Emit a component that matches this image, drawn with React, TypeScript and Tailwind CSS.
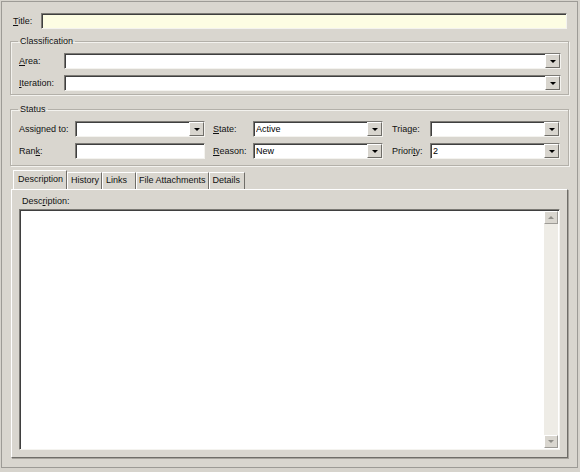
const font = { fontFamily: '"Liberation Sans", Arial, sans-serif' }

function DropButton() {
  return (
    <div className="flex h-[14px] w-[15px] shrink-0 items-center justify-center border border-t-white border-l-white border-b-[#6f6d68] border-r-[#6f6d68] bg-[#d8d5ce]">
      <div className="h-0 w-0 border-x-[3px] border-t-[3px] border-x-transparent border-t-black" />
    </div>
  )
}

function Box({ value, combo, className }: { value?: string; combo?: boolean; className?: string }) {
  return (
    <div
      className={
        "flex h-[16px] items-center border border-[#7c7a75] border-b-[#f4f3ef] border-r-[#f4f3ef] bg-white shadow-[inset_1px_1px_0_#3f3f3f] pl-[2px] pr-0 " +
        (className ?? "")
      }
    >
      <span className="flex-1 truncate text-[9px] leading-none text-black">{value}</span>
      {combo && <DropButton />}
    </div>
  )
}

function Label({ text, u, className }: { text: string; u: number; className?: string }) {
  return (
    <span className={"text-[9px] leading-none text-[#111] " + (className ?? "")}>
      {text.slice(0, u)}
      <span className="underline">{text[u]}</span>
      {text.slice(u + 1)}
    </span>
  )
}

function Group({ title, children, className }: { title: string; children: React.ReactNode; className?: string }) {
  return (
    <fieldset className={"mx-[8px] border border-[#b3b0a9] pl-[8px] shadow-[1px_1px_0_#f3f2ee,inset_1px_1px_0_#f3f2ee] " + (className ?? "")}>
      <legend className="-ml-[1px] px-[2px] text-[9px] leading-none text-[#111]">{title}</legend>
      {children}
    </fieldset>
  )
}

const tabs = [
  { t: "Description", p: "pl-[4px] pr-[3px]" },
  { t: "History", p: "pl-[3px] pr-[2px]" },
  { t: "Links", p: "pl-[3px] pr-[8px]" },
  { t: "File Attachments", p: "px-[2px]" },
  { t: "Details", p: "pl-[3px] pr-[4px]" },
]

export default function App() {
  return (
    <div className="h-[472px] w-[580px] bg-[#d6d3cc] p-[1px]" style={font}>
      <div className="flex h-[467px] w-[577px] flex-col border border-[#9d9b96] bg-[#d9d6cf]">
        {/* title */}
        <div className="flex items-center pl-[11px] pr-[10px] pt-[11px]">
          <Label text="Title:" u={0} className="w-[28px]" />
          <div className="h-[16px] flex-1 border border-[#7c7a75] border-b-[#f4f3ef] border-r-[#f4f3ef] bg-[#fdfde3] shadow-[inset_1px_1px_0_#3f3f3f]" />
        </div>

        <Group title="Classification" className="mt-[8px] pb-[3px] pr-[7px]">
          <div className="mt-[7px] flex items-center">
            <Label text="Area:" u={0} className="w-[45px]" />
            <Box combo className="flex-1" />
          </div>
          <div className="mt-[6px] flex items-center">
            <Label text="Iteration:" u={0} className="w-[45px]" />
            <Box combo className="flex-1" />
          </div>
        </Group>

        <Group title="Status" className="mt-[10px] pb-[6px]">
          <div className="mt-[7px] flex items-center">
            <span className="w-[56px] text-[9px] leading-none text-[#111]">Assigned to:</span>
            <Box combo className="w-[130px]" />
            <Label text="State:" u={0} className="ml-[8px] w-[40px]" />
            <Box combo value="Active" className="w-[130px]" />
            <Label text="Triage:" u={4} className="ml-[9px] w-[38px]" />
            <Box combo className="w-[130px]" />
          </div>
          <div className="mt-[6px] flex items-center">
            <Label text="Rank:" u={3} className="w-[56px]" />
            <Box className="w-[130px]" />
            <Label text="Reason:" u={0} className="ml-[8px] w-[40px]" />
            <Box combo value="New" className="w-[130px]" />
            <Label text="Priority:" u={6} className="ml-[9px] w-[38px]" />
            <Box combo value="2" className="w-[130px]" />
          </div>
        </Group>

        {/* tabs */}
        <div className="mt-[4px] flex pl-[11px]">
          {tabs.map(({ t, p }, i) => (
            <div
              key={t}
              className={
                (i === 0
                  ? "relative z-10 -mb-[1px] h-[19px] bg-[#d9d6cf] "
                  : "mt-[2px] h-[17px] ") +
                "flex items-center border-l border-t border-r border-l-white border-t-white border-r-[#6f6d68] text-[9px] text-[#111] " +
                p
              }
            >
              {t}
            </div>
          ))}
        </div>
        <div className="mx-[9px] flex h-[269px] flex-col border border-t-white border-l-white border-b-[#6f6d68] border-r-[#6f6d68] px-[7px] shadow-[1px_1px_0_#a7a49d]">
          <span className="mt-[7px] pl-[3px] text-[9px] leading-none text-[#111]">
            Desc<span className="underline">r</span>iption:
          </span>
          <div className="mb-[7px] mt-[3px] flex flex-1 border border-[#7c7a75] border-b-[#f4f3ef] border-r-[#f4f3ef] bg-white shadow-[inset_1px_1px_0_#3f3f3f] pr-[1px] pt-[1px] pb-[1px]">
            <div className="flex-1" />
            <div className="flex w-[14px] flex-col bg-[#eeece6]">
              <div className="flex h-[13px] items-center justify-center border border-t-white border-l-white border-b-[#9d9b96] border-r-[#9d9b96] bg-[#d9d6cf]">
                <div className="h-0 w-0 border-x-[3px] border-b-[3px] border-x-transparent border-b-[#8f8d88]" />
              </div>
              <div className="flex-1" />
              <div className="flex h-[13px] items-center justify-center border border-t-white border-l-white border-b-[#9d9b96] border-r-[#9d9b96] bg-[#d9d6cf]">
                <div className="h-0 w-0 border-x-[3px] border-t-[3px] border-x-transparent border-t-[#8f8d88]" />
              </div>
            </div>
          </div>
        </div>
      </div>
    </div>
  )
}
